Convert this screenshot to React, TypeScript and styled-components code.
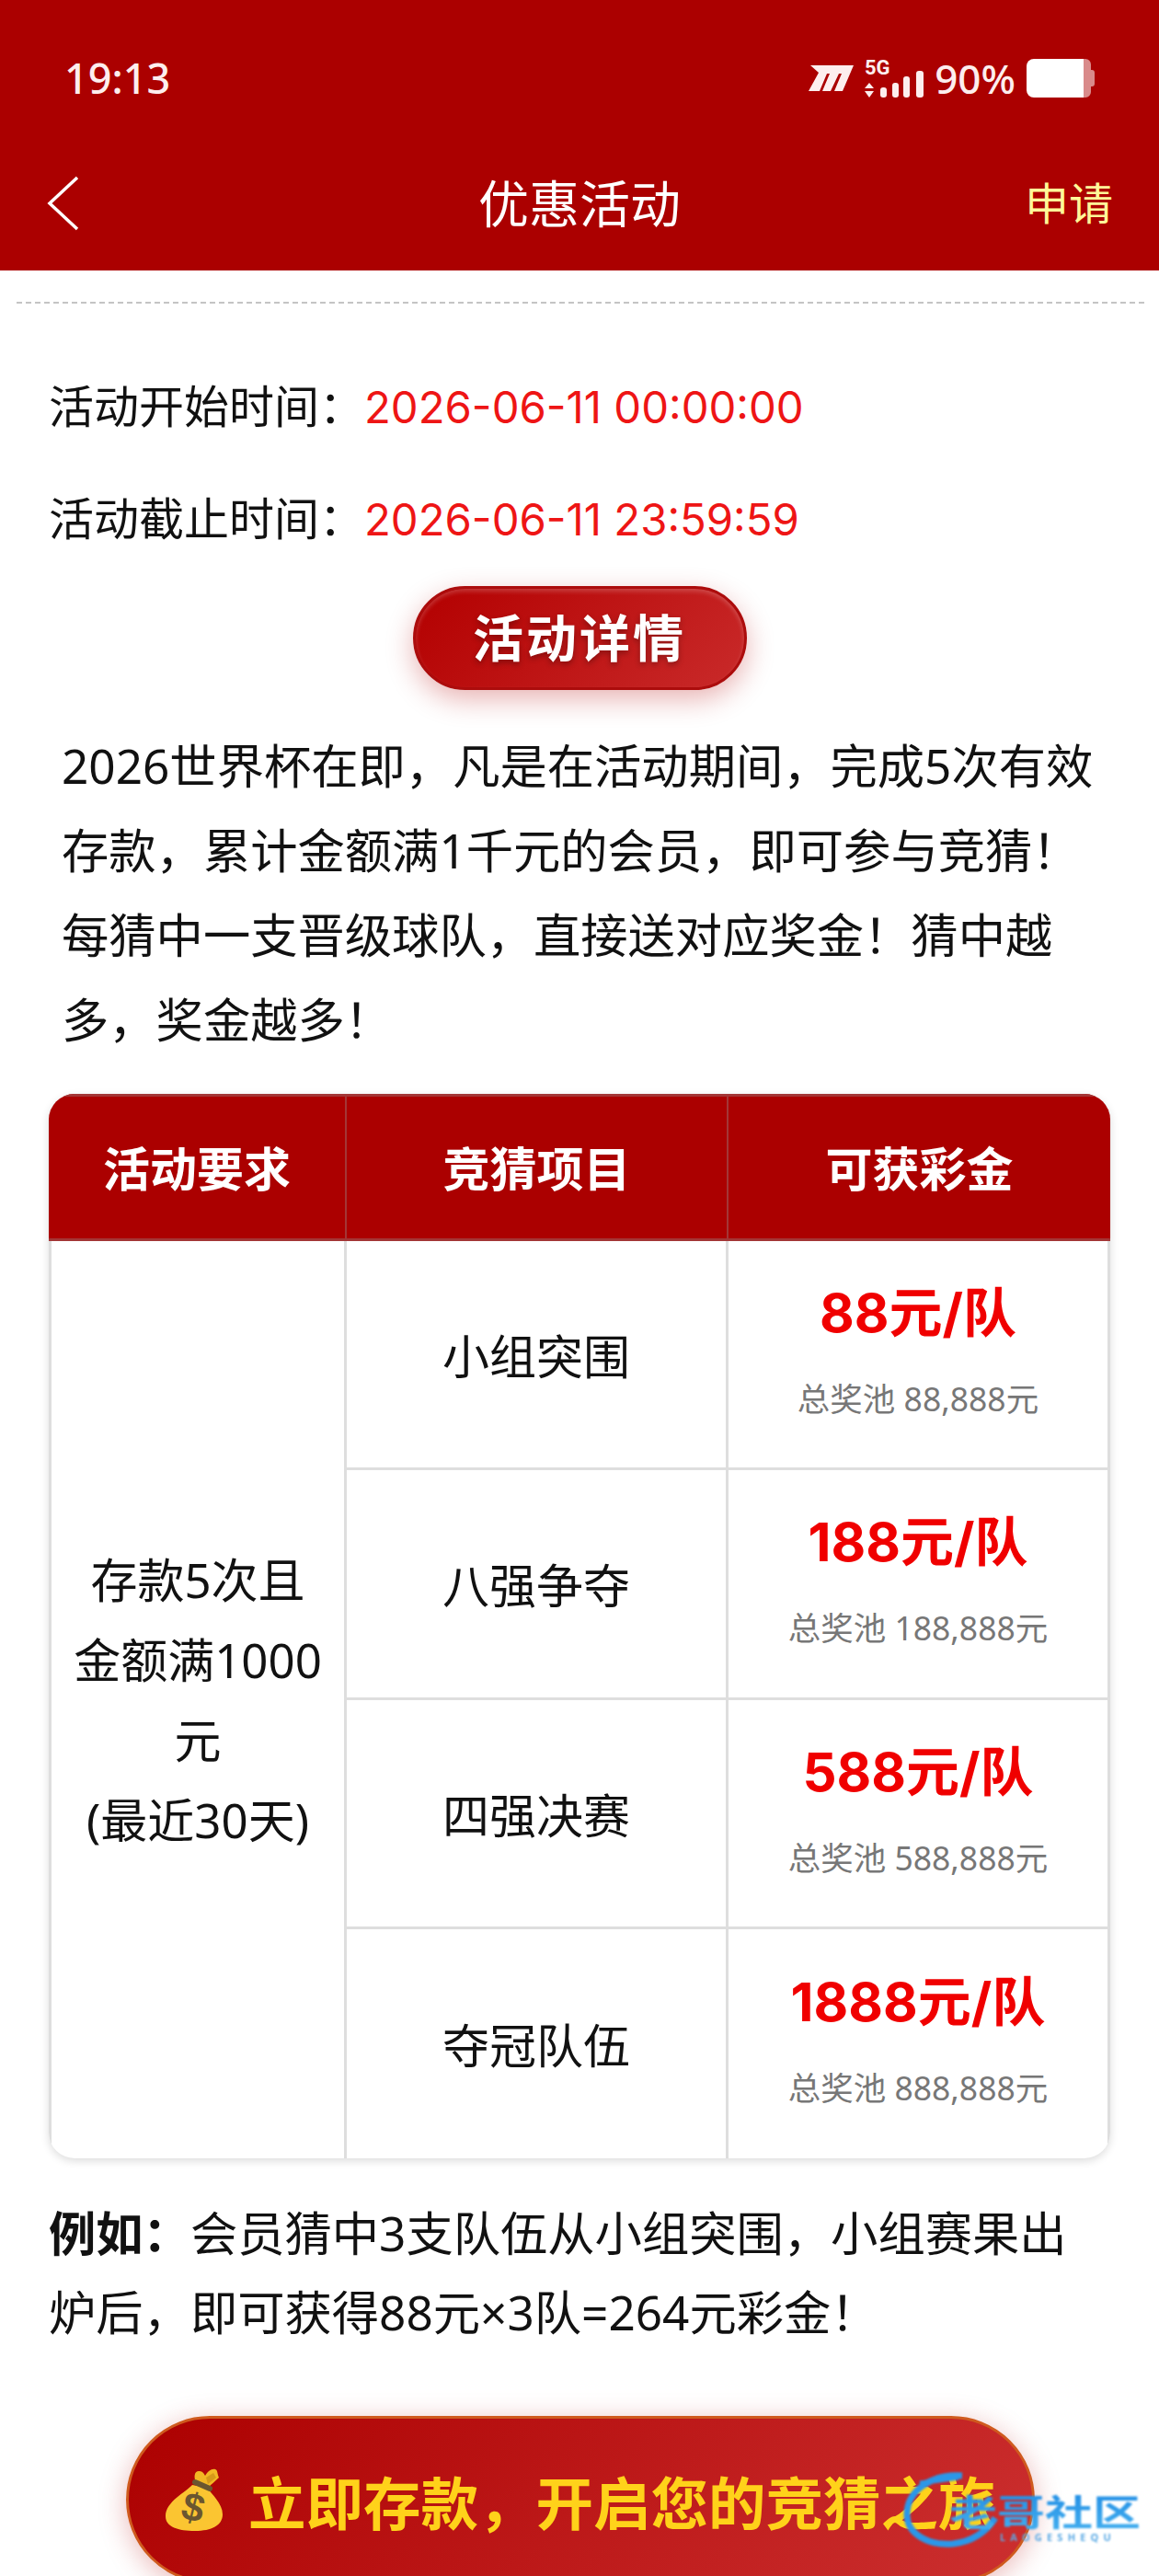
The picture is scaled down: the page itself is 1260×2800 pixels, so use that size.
import styled, { createGlobalStyle } from 'styled-components';

const GlobalStyle = createGlobalStyle`
  html, body {
    margin: 0;
    padding: 0;
    background: #fff;
    height: 2800px;
    overflow: hidden;
  }
  * {
    box-sizing: border-box;
  }
`;

const FONT = `"Noto Sans", "Noto Sans CJK SC", sans-serif`;
const DIGIT_FONT = `Inter, "Noto Sans CJK SC", sans-serif`;

const Page = styled.div`
  position: relative;
  width: 1260px;
  height: 2800px;
  overflow: hidden;
  background: #fff;
  font-family: ${FONT};
  color: #111;
`;

const Header = styled.header`
  height: 294px;
  background: #ab0000;
  color: #fff;
  display: flex;
  flex-direction: column;
`;

const StatusBar = styled.div`
  height: 170px;
  padding: 54px 70px 0 70px;
  display: flex;
  justify-content: space-between;
  align-items: flex-start;
`;

const Clock = styled.span`
  font-size: 45px;
  line-height: 62px;
  font-weight: 500;
  color: #fdeeee;
`;

const StatusIcons = styled.div`
  display: flex;
  align-items: center;
  height: 62px;
  gap: 12px;
`;

const Battery = styled.span`
  font-size: 44px;
  line-height: 62px;
  font-weight: 500;
  color: #fdeeee;
`;

const NavBar = styled.div`
  height: 124px;
  padding: 0 50px 22px;
  display: grid;
  grid-template-columns: 1fr auto 1fr;
  align-items: center;
`;

const BackLink = styled.a`
  display: flex;
  align-items: center;
`;

const NavTitle = styled.h1`
  margin: 0;
  font-size: 55px;
  font-weight: 400;
  line-height: 72px;
`;

const ApplyLink = styled.a`
  justify-self: end;
  color: #fff799;
  font-size: 48px;
  line-height: 64px;
`;

const Content = styled.main`
  display: flex;
  flex-direction: column;
`;

const Divider = styled.div`
  margin: 34px 16px 0 18px;
  border-top: 2px dashed #c4c4c4;
`;

const DateList = styled.div`
  padding: 76px 53px 0;
  display: flex;
  flex-direction: column;
  gap: 50px;
`;

const DateRow = styled.div`
  font-size: 49px;
  line-height: 70px;
`;

const DateValue = styled.span`
  color: #ee1515;
  font-family: ${DIGIT_FONT};
  font-size: 47.3px;
`;

const DetailRow = styled.div`
  display: flex;
  justify-content: center;
  margin-top: 37px;
`;

const DetailButton = styled.div`
  width: 363px;
  height: 113px;
  padding-bottom: 8px;
  border-radius: 57px;
  border: 3px solid #ac0c0c;
  background: linear-gradient(135deg, #b30000, #c92a2a);
  box-shadow: 0 10px 30px rgba(180, 0, 0, 0.3), inset 0 3px 5px rgba(255, 255, 255, 0.2);
  color: #fff;
  font-size: 55px;
  font-weight: 700;
  letter-spacing: 3px;
  display: flex;
  align-items: center;
  justify-content: center;
  text-shadow: 0 3px 6px rgba(0, 0, 0, 0.3);
`;

const Intro = styled.p`
  margin: 36px 0 0;
  padding: 0 68px 0 67px;
  font-size: 51.3px;
  line-height: 92px;
`;

const Table = styled.div`
  margin: 35px 53px 0;
  height: 1157px;
  border-radius: 28px;
  overflow: hidden;
  box-shadow: 0 3px 10px rgba(0, 0, 0, 0.14);
  display: grid;
  grid-template-columns: 324px 415px 1fr;
  grid-template-rows: 160px repeat(4, 1fr);
`;

const HeadCell = styled.div`
  background: #ab0000;
  border-top: 3px solid #a33636;
  border-bottom: 3px solid #a33636;
  border-right: 2px solid #a33636;
  padding-bottom: 3px;
  color: #fff;
  font-size: 51px;
  font-weight: 700;
  display: flex;
  align-items: center;
  justify-content: center;

  &:nth-child(3) {
    border-right: none;
  }
`;

const Cell = styled.div<{ $bottom?: boolean }>`
  border-right: 3px solid #dedede;
  border-bottom: ${({ $bottom }) => ($bottom ? 'none' : '3px solid #dedede')};
  display: flex;
  flex-direction: column;
  align-items: center;
  justify-content: center;
  text-align: center;
`;

const RequireCell = styled(Cell)`
  grid-row: 2 / span 4;
  border-left: 3px solid #dedede;
  border-bottom: none;
  font-size: 51px;
  line-height: 87px;
  padding: 0 18px;
`;

const ItemName = styled.span`
  font-size: 51px;
`;

const PrizeBox = styled(Cell)`
  padding-bottom: 12px;
`;

const Prize = styled.div`
  color: #f00000;
  font-family: ${DIGIT_FONT};
  font-size: 58px;
  line-height: 78px;
  font-weight: 700;
`;

const Pool = styled.div`
  margin-top: 30px;
  color: #777;
  font-size: 35.5px;
  line-height: 48px;
`;

const Example = styled.p`
  margin: 38px 0 0;
  padding: 0 53px;
  font-size: 51.3px;
  line-height: 86px;
`;

const ExampleLabel = styled.strong`
  font-weight: 700;
`;

const DepositButton = styled.div`
  margin: 70px 0 0 137px;
  width: 988px;
  height: 182px;
  flex-shrink: 0;
  border-radius: 91px;
  border: 3px solid #cf5a1e;
  background: linear-gradient(135deg, #ac0000, #cc3030);
  box-shadow: 0 6px 30px rgba(180, 0, 0, 0.28);
  color: #ffd21a;
  font-size: 62.5px;
  font-weight: 700;
  white-space: nowrap;
  display: flex;
  align-items: center;
  padding-left: 40px;
  gap: 28px;
`;

const Watermark = styled.div`
  position: absolute;
  left: 980px;
  top: 2685px;
  width: 280px;
  height: 90px;
  filter: blur(0.8px);
`;

const WatermarkRing = styled.svg`
  position: absolute;
  left: 0;
  top: 0;
`;

const WatermarkName = styled.div`
  position: absolute;
  left: 52px;
  top: 10px;
  font-size: 52px;
  line-height: 70px;
  font-weight: 700;
  white-space: nowrap;
  transform: scaleY(0.75);
  background: linear-gradient(#1f8be4, #46b2f0);
  -webkit-background-clip: text;
  background-clip: text;
  color: transparent;
`;

const WatermarkLatin = styled.div`
  position: absolute;
  left: 107px;
  top: 66px;
  font-size: 11px;
  line-height: 14px;
  letter-spacing: 5.2px;
  font-weight: 700;
  color: #5aa9e4;
`;

const CarrierIcon = () => (
  <svg width="49" height="28" viewBox="0 0 49 28">
    <path
      fill="#fdeeee"
      d="M2 0H49L37 28H28L36 9H33L24 28H15L23 9H20L12 28H0L11 8Z"
    />
  </svg>
);

const SignalIcon = () => (
  <svg width="64" height="42" viewBox="0 0 64 42">
    <text x="0" y="17" fontSize="22" fontWeight="700" fill="#fdeeee" fontFamily="Roboto, sans-serif">
      5G
    </text>
    <path fill="#fdeeee" d="M5 26L10 32H0ZM5 42L10 35H0Z" />
    <rect x="17" y="31" width="7" height="11" rx="3" fill="#fdeeee" />
    <rect x="30" y="26" width="7" height="16" rx="3" fill="#fdeeee" />
    <rect x="42" y="19" width="7" height="23" rx="3" fill="#fdeeee" />
    <rect x="56" y="13" width="8" height="29" rx="3" fill="#fdeeee" />
  </svg>
);

const BatteryIcon = () => (
  <svg width="74" height="42" viewBox="0 0 74 42">
    <path fill="#fff" d="M8 0H62V42H8a8 8 0 0 1-8-8V8a8 8 0 0 1 8-8Z" />
    <path fill="#d98a8a" d="M62 0h2a6 6 0 0 1 6 6v6h1a3 3 0 0 1 3 3v12a3 3 0 0 1-3 3h-1v6a6 6 0 0 1-6 6h-2Z" />
  </svg>
);

const BackIcon = () => (
  <svg width="36" height="60" viewBox="0 0 36 60" fill="none">
    <path d="M34 2L4 30L34 58" stroke="#fff" strokeWidth="3.5" />
  </svg>
);

const MoneyBag = () => (
  <svg width="62" height="68" viewBox="0 0 62 68">
    <path fill="#f2b824" d="M33 15C30 8 32 2 37 3c3 0 5 3 6 5 3-5 7-8 11-7 3 1 2 5 4 9-4 4-8 7-11 10Z" />
    <path fill="#d69a1a" d="M44 10l8-5 3 5-9 7Z" />
    <path fill="#fbc531" d="M29 18 C22 26 0 36 0 52 C0 64 14 68 32 68 C50 68 62 62 62 50 C62 38 50 28 45 21 Z" />
    <path d="M32 15L48 22" stroke="#6b5630" strokeWidth="6" strokeLinecap="round" />
    <text
      x="30"
      y="57"
      textAnchor="middle"
      fontSize="43"
      fontWeight="700"
      fill="#6b5630"
      fontFamily="Liberation Sans, sans-serif"
      transform="rotate(14 30 43)"
    >
      $
    </text>
  </svg>
);

const rows = [
  { name: '小组突围', prize: '88元/队', pool: '总奖池 88,888元' },
  { name: '八强争夺', prize: '188元/队', pool: '总奖池 188,888元' },
  { name: '四强决赛', prize: '588元/队', pool: '总奖池 588,888元' },
  { name: '夺冠队伍', prize: '1888元/队', pool: '总奖池 888,888元' },
];

const Row = ({
  row,
  bottom,
}: {
  row: { name: string; prize: string; pool: string };
  bottom: boolean;
}) => (
  <>
    <Cell $bottom={bottom}>
      <ItemName>{row.name}</ItemName>
    </Cell>
    <PrizeBox $bottom={bottom}>
      <Prize>{row.prize}</Prize>
      <Pool>{row.pool}</Pool>
    </PrizeBox>
  </>
);

export default function App() {
  return (
    <Page>
      <GlobalStyle />
      <Header>
        <StatusBar>
          <Clock>19:13</Clock>
          <StatusIcons>
            <CarrierIcon />
            <SignalIcon />
            <Battery>90%</Battery>
            <BatteryIcon />
          </StatusIcons>
        </StatusBar>
        <NavBar>
          <BackLink>
            <BackIcon />
          </BackLink>
          <NavTitle>优惠活动</NavTitle>
          <ApplyLink>申请</ApplyLink>
        </NavBar>
      </Header>
      <Content>
        <Divider />
        <DateList>
          <DateRow>
            活动开始时间：<DateValue>2026-06-11 00:00:00</DateValue>
          </DateRow>
          <DateRow>
            活动截止时间：<DateValue>2026-06-11 23:59:59</DateValue>
          </DateRow>
        </DateList>
        <DetailRow>
          <DetailButton>活动详情</DetailButton>
        </DetailRow>
        <Intro>
          2026世界杯在即，凡是在活动期间，完成5次有效存款，累计金额满1千元的会员，即可参与竞猜！每猜中一支晋级球队，直接送对应奖金！猜中越多，奖金越多！
        </Intro>
        <Table>
          <HeadCell>活动要求</HeadCell>
          <HeadCell>竞猜项目</HeadCell>
          <HeadCell>可获彩金</HeadCell>
          <RequireCell>
            <div>存款5次且金额满1000元</div>
            <div>(最近30天)</div>
          </RequireCell>
          {rows.map((row, i) => (
            <Row key={row.name} row={row} bottom={i === rows.length - 1} />
          ))}
        </Table>
        <Example>
          <ExampleLabel>例如：</ExampleLabel>会员猜中3支队伍从小组突围，小组赛果出炉后，即可获得88元×3队=264元彩金！
        </Example>
        <DepositButton>
          <MoneyBag />
          立即存款，开启您的竞猜之旅
        </DepositButton>
      </Content>
      <Watermark>
        <WatermarkRing width="110" height="90" viewBox="0 0 110 90" fill="none">
          <path d="M66 6C30 4 6 24 6 48c0 22 24 34 50 32 18-2 34-10 46-28" stroke="#2b97e8" strokeWidth="7" />
          <path d="M20 14L62 8" stroke="#2b97e8" strokeWidth="5" />
        </WatermarkRing>
        <WatermarkName>老哥社区</WatermarkName>
        <WatermarkLatin>LAOGESHEQU</WatermarkLatin>
      </Watermark>
    </Page>
  );
}
